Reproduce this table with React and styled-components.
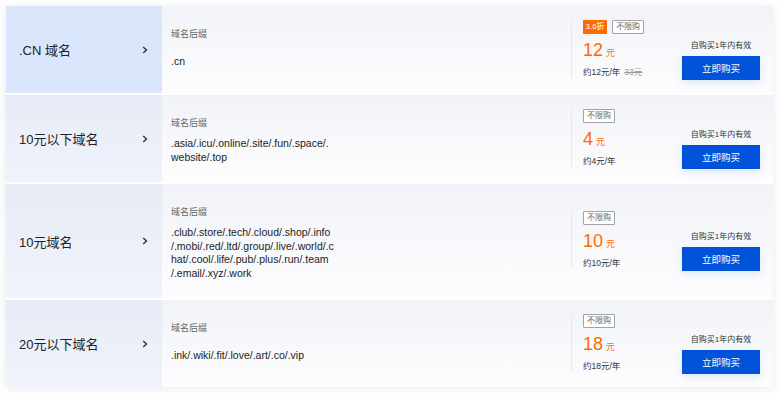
import React from "react";
import styled, { createGlobalStyle } from "styled-components";

const Global = createGlobalStyle`
  html, body { margin: 0; padding: 0; background: #fff; }
  body { font-family: "Liberation Sans", Arial, "Noto Sans CJK SC", sans-serif; color: #333; }
  * { box-sizing: border-box; }
`;

const Page = styled.div`
  padding: 6px;
`;

const Table = styled.div`
  width: 767px;
  display: flex;
  flex-direction: column;
  gap: 2px;
  background: #fff;
  box-shadow: 0 2px 10px rgba(30, 60, 120, 0.1);
`;

const Row = styled.div`
  display: grid;
  grid-template-columns: 156px 1fr 202px;
  background: linear-gradient(180deg, #f1f3f8 0%, #fdfdfe 100%);
`;

const Category = styled.div`
  display: flex;
  align-items: center;
  justify-content: space-between;
  padding: 0 14px 0 13px;
  font-size: 13px;
  color: #222;
  background: ${(p) =>
    p.$active
      ? "#d9e6fb"
      : "linear-gradient(180deg, #e6ebf5 0%, #eef3fc 100%)"};
`;

const Middle = styled.div`
  padding: 22px 0 18px 9px;
  display: flex;
  flex-direction: column;
`;

const Label = styled.div`
  font-size: 9px;
  line-height: 12px;
  color: #666;
  margin-bottom: 8px;
`;

const Suffixes = styled.div`
  min-height: 27px;
  display: flex;
  flex-direction: column;
  justify-content: center;
  font-size: 10.5px;
  line-height: 13.5px;
  color: #222;
`;

const Line = styled.div`
  white-space: nowrap;
`;

const Side = styled.div`
  display: flex;
  align-items: center;
  padding-right: 13px;
`;

const SideInner = styled.div`
  display: flex;
  align-items: flex-end;
`;

const PriceBlock = styled.div`
  width: 111px;
  border-left: 1px solid #e6e8ec;
  padding-left: 11px;
  margin-bottom: 2px;
  display: flex;
  flex-direction: column;
`;

const Tags = styled.div`
  display: flex;
  gap: 5px;
  height: 14px;
`;

const Tag = styled.span`
  display: inline-block;
  height: 14px;
  line-height: ${(p) => (p.$hot ? "14px" : "12px")};
  padding: 0 ${(p) => (p.$hot ? "2.5px" : "3px")};
  font-size: 8px;
  color: ${(p) => (p.$hot ? "#fff" : "#666")};
  background: ${(p) => (p.$hot ? "#ff6a00" : "#fff")};
  border: ${(p) => (p.$hot ? "none" : "1px solid #a3a3a3")};
  border-radius: 1px;
`;

const Price = styled.div`
  margin-top: 6px;
  color: #ff6a00;
  font-size: 18px;
  line-height: 20px;
  display: flex;
  align-items: baseline;
`;

const Unit = styled.span`
  font-size: 9px;
  margin-left: 3px;
`;

const Sub = styled.div`
  margin-top: 3px;
  font-size: 8.5px;
  line-height: 12px;
  color: #333;
`;

const Old = styled.span`
  margin-left: 4px;
  color: #999;
  text-decoration: line-through;
`;

const Buy = styled.div`
  display: flex;
  flex-direction: column;
  align-items: center;
  width: 78px;
`;

const Note = styled.div`
  font-size: 8px;
  line-height: 12px;
  color: #333;
  margin-bottom: 4px;
  white-space: nowrap;
`;

const Button = styled.button`
  width: 78px;
  height: 24px;
  border: none;
  border-radius: 0;
  background: #0052d9;
  color: #fff;
  font-family: inherit;
  font-size: 9.5px;
  padding: 0;
  cursor: pointer;
  box-shadow: 0 3px 8px rgba(0, 82, 217, 0.12);
`;

const Chevron = () => (
  <svg width="6" height="8" viewBox="0 0 6 8" aria-hidden="true">
    <polyline points="1.2,1 4.5,4 1.2,7" fill="none" stroke="#333" strokeWidth="1.4" />
  </svg>
);

const rows = [
  {
    name: ".CN 域名",
    active: true,
    suffix: [".cn"],
    discount: "3.6折",
    price: "12",
    per: "约12元/年",
    old: "33元",
  },
  {
    name: "10元以下域名",
    suffix: [".asia/.icu/.online/.site/.fun/.space/.", "website/.top"],
    price: "4",
    per: "约4元/年",
  },
  {
    name: "10元域名",
    suffix: [
      ".club/.store/.tech/.cloud/.shop/.info",
      "/.mobi/.red/.ltd/.group/.live/.world/.c",
      "hat/.cool/.life/.pub/.plus/.run/.team",
      "/.email/.xyz/.work",
    ],
    price: "10",
    per: "约10元/年",
  },
  {
    name: "20元以下域名",
    suffix: [".ink/.wiki/.fit/.love/.art/.co/.vip"],
    price: "18",
    per: "约18元/年",
  },
];

export default function App() {
  return (
    <>
      <Global />
      <Page>
        <Table>
          {rows.map((r) => (
            <Row key={r.name}>
              <Category $active={r.active}>
                <span>{r.name}</span>
                <Chevron />
              </Category>
              <Middle>
                <Label>域名后缀</Label>
                <Suffixes>
                  {r.suffix.map((l) => (
                    <Line key={l}>{l}</Line>
                  ))}
                </Suffixes>
              </Middle>
              <Side>
                <SideInner>
                  <PriceBlock>
                    <Tags>
                      {r.discount && <Tag $hot>{r.discount}</Tag>}
                      <Tag>不限购</Tag>
                    </Tags>
                    <Price>
                      {r.price}
                      <Unit>元</Unit>
                    </Price>
                    <Sub>
                      {r.per}
                      {r.old && <Old>{r.old}</Old>}
                    </Sub>
                  </PriceBlock>
                  <Buy>
                    <Note>自购买1年内有效</Note>
                    <Button>立即购买</Button>
                  </Buy>
                </SideInner>
              </Side>
            </Row>
          ))}
        </Table>
      </Page>
    </>
  );
}
